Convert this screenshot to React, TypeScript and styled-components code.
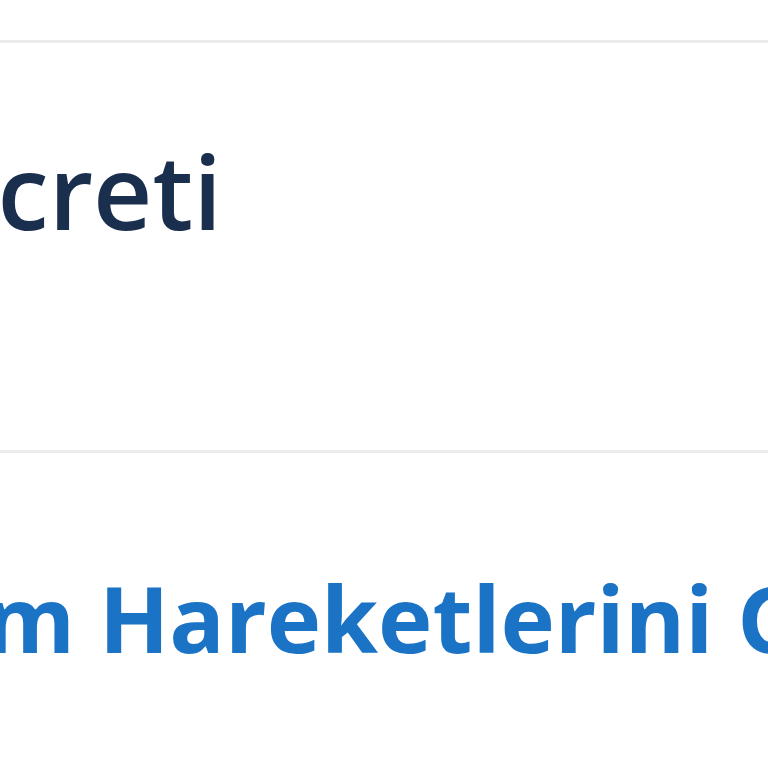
import React from "react";
import styled, { createGlobalStyle } from "styled-components";

const Global = createGlobalStyle`
  html, body { margin: 0; padding: 0; background: #ffffff; }
  body { overflow: hidden; font-family: "Open Sans", "Noto Sans", sans-serif; }
`;

const Page = styled.div`
  width: 768px;
  height: 768px;
  overflow: hidden;
  display: flex;
  flex-direction: column;
  padding-top: 40px;
  box-sizing: border-box;
  background: #ffffff;
`;

const Divider = styled.div`
  height: 3px;
  background: #ececec;
  flex-shrink: 0;
`;

const Row = styled.div<{ $top: number; $bottom: number; $shift: number }>`
  padding: ${(p) => p.$top}px 0 ${(p) => p.$bottom}px;
  margin-left: ${(p) => p.$shift}px;
  white-space: nowrap;
`;

const Label = styled.span`
  font-size: 103px;
  line-height: 1;
  font-weight: 600;
  color: #1a2e4d;
`;

const Link = styled.a`
  font-size: 92px;
  line-height: 1;
  font-weight: 700;
  color: #1b73c6;
  text-decoration: none;
`;

export default function App() {
  return (
    <>
      <Global />
      <Page>
        <Divider />
        <Row $top={96} $bottom={208} $shift={-79}>
          <Label>Ücreti</Label>
        </Row>
        <Divider />
        <Row $top={119} $bottom={0} $shift={-129}>
          <Link href="#">Tüm Hareketlerini Gör</Link>
        </Row>
      </Page>
    </>
  );
}
